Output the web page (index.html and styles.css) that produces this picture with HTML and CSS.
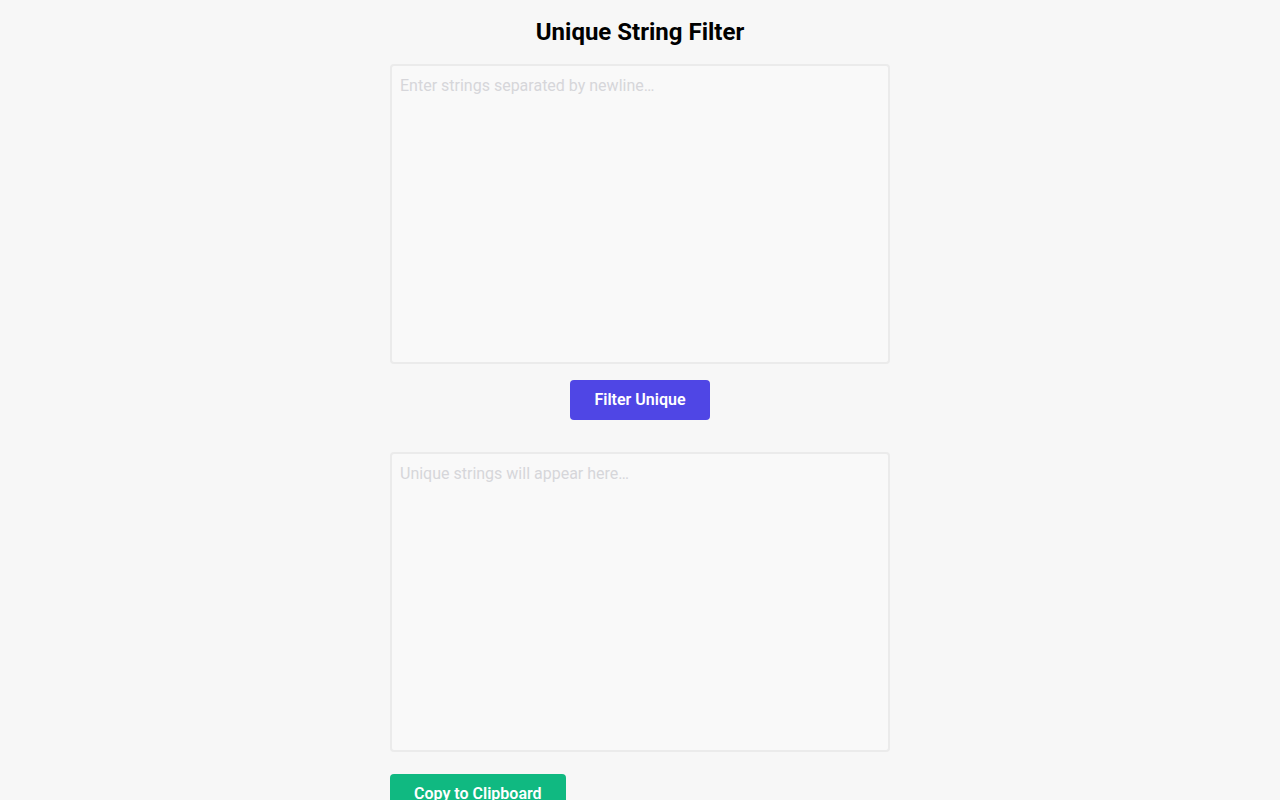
FILE: index.html
```html
<!DOCTYPE html>
<html lang="en">
<head>
    <meta charset="UTF-8">
    <meta name="viewport" content="width=device-width, initial-scale=1.0">
    <title>Unique String Filter</title>
    <link rel="stylesheet" href="styles.css">
</head>
<body>

    <div class="content">
        <h1>Unique String Filter</h1>

        <textarea id="input" class="box" placeholder="Enter strings separated by newline…"></textarea>

        <div class="actions">
            <button id="filter-btn" class="btn btn-filter">Filter Unique</button>
        </div>

        <textarea id="output" class="box" placeholder="Unique strings will appear here…" readonly></textarea>

        <div class="copy-row">
            <button id="copy-btn" class="btn btn-copy">Copy to Clipboard</button>
        </div>
    </div>

    <script>
        document.getElementById('filter-btn').addEventListener('click', function () {
            const lines = document.getElementById('input').value.split('\n');
            const unique = [...new Set(lines.map(l => l.trim()).filter(l => l))];
            document.getElementById('output').value = unique.join('\n');
        });

        document.getElementById('copy-btn').addEventListener('click', function () {
            const out = document.getElementById('output');
            out.select();
            document.execCommand('copy');
        });
    </script>

</body>
</html>
```

FILE: styles.css
```css
body {
    font-family: Roboto, "Liberation Sans", sans-serif;
    background-color: #f7f7f7;
    color: #000;
    margin: 0;
    padding: 0;
}
.content {
    width: 500px;
    margin: 0 auto;
    padding-top: 16px;
    display: flex;
    flex-direction: column;
}
h1 {
    font-size: 24px;
    line-height: 32px;
    font-weight: 700;
    text-align: center;
    margin: 0 0 16px;
}
.box {
    display: block;
    box-sizing: border-box;
    width: 500px;
    height: 300px;
    padding: 8px;
    border: 2px solid #ebebeb;
    border-radius: 4px;
    background-color: #f9f9f9;
    font-family: Roboto, "Liberation Sans", sans-serif;
    font-size: 16px;
    line-height: 24px;
    color: #333;
    resize: none;
    outline: none;
}
.box::placeholder {
    color: #d6d6da;
}
.actions {
    display: flex;
    justify-content: center;
    margin: 16px 0 32px;
}
.copy-row {
    display: flex;
    margin-top: 22px;
}
.btn {
    height: 40px;
    padding: 0 24px 2px;
    border: none;
    border-radius: 4px;
    color: white;
    font-family: Roboto, "Liberation Sans", sans-serif;
    font-size: 16px;
    font-weight: 600;
    cursor: pointer;
}
.btn-filter {
    background-color: #4f46e5;
}
.btn-copy {
    background-color: #10b981;
}
```
